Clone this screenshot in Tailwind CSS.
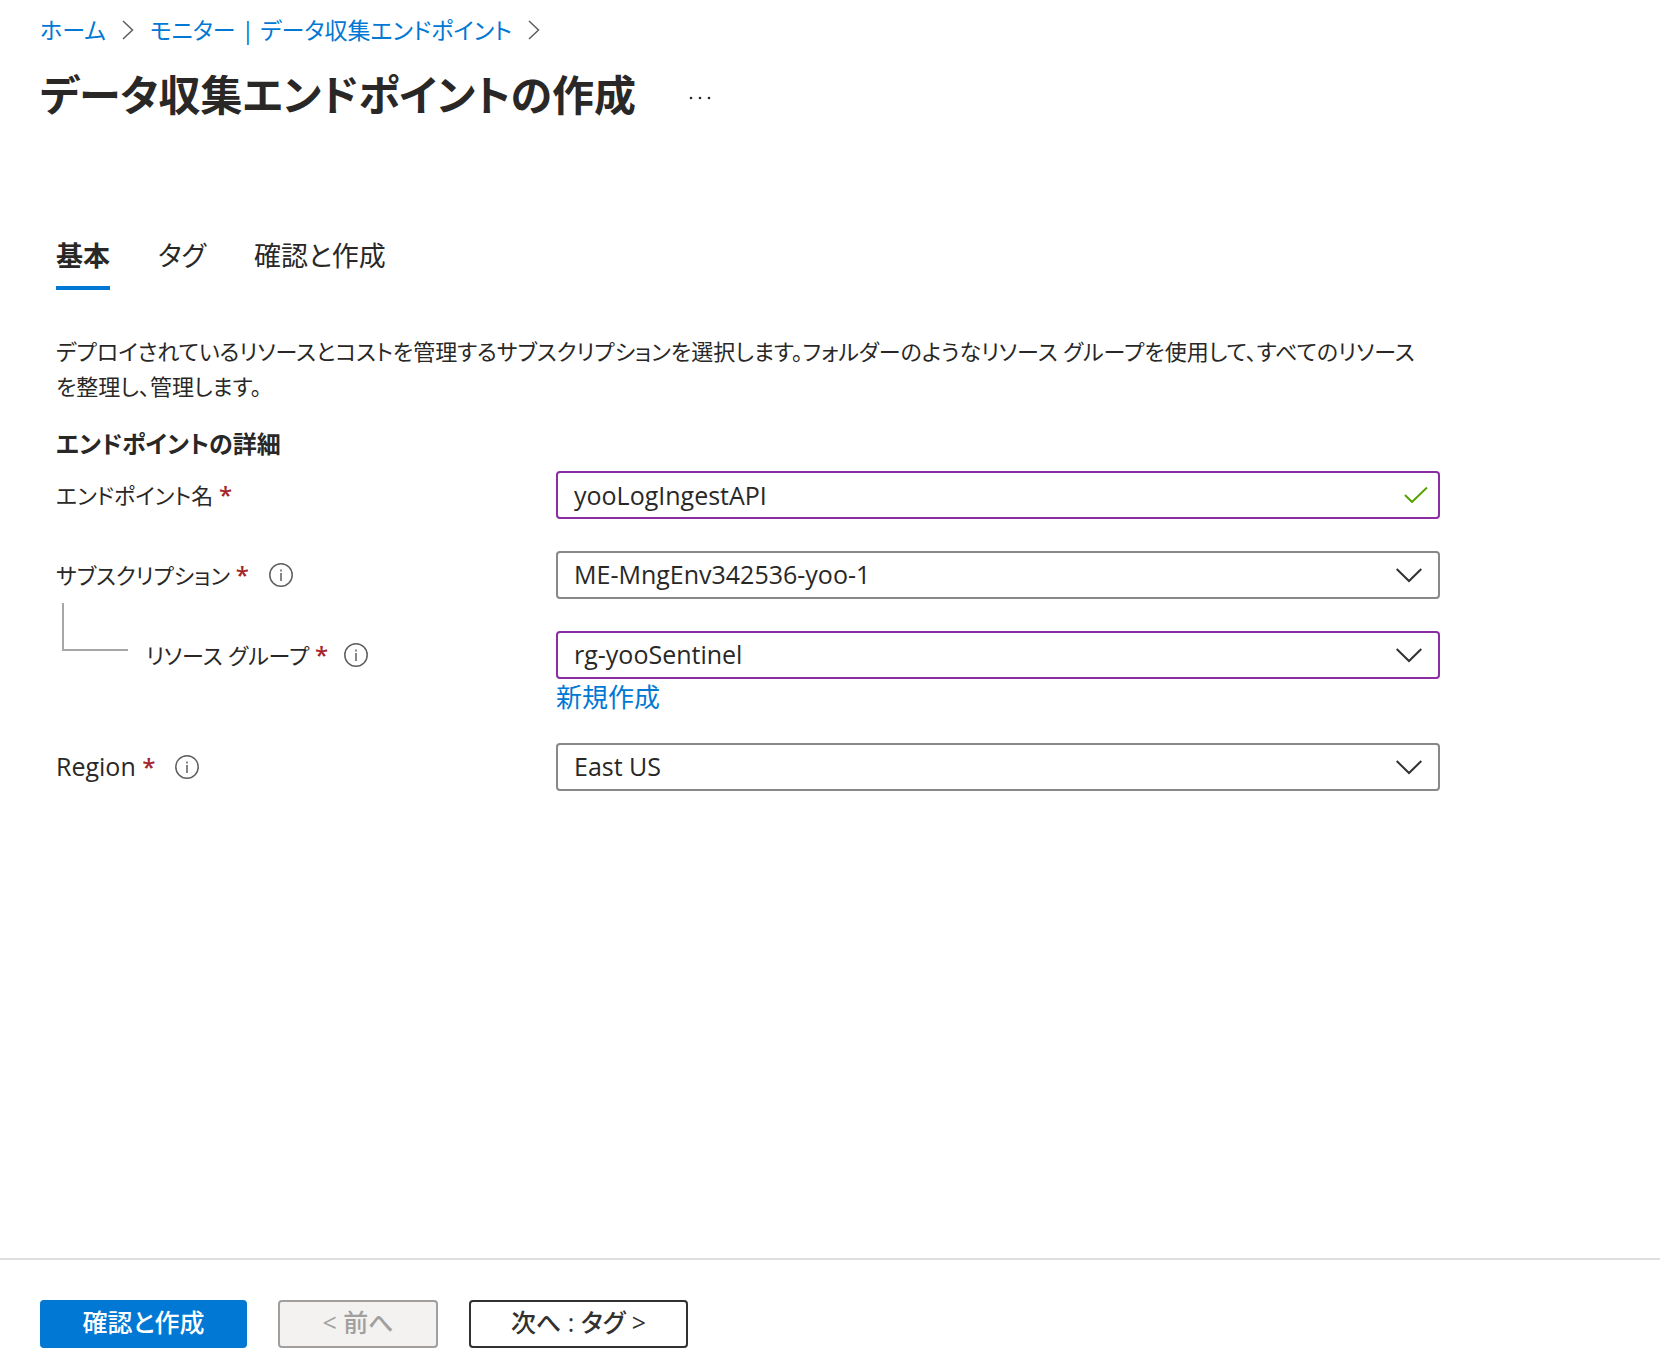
<!DOCTYPE html>
<html lang="ja">
<head>
    <meta charset="UTF-8">
    <meta name="viewport" content="width=device-width, initial-scale=1.0">
    <title>データ収集エンドポイントの作成</title>
    <script src="https://cdn.jsdelivr.net/npm/@tailwindcss/browser@4"></script>
</head>
<body class="flex flex-col min-h-screen bg-white text-[#292827] text-[22px] font-['Open_Sans','Noto_Sans_CJK_JP',sans-serif] [font-feature-settings:'palt']">

    <header class="px-10 pt-3">
        <nav class="flex items-center gap-4 h-9 text-[23px] text-[#0078d4]">
            <a href="#">ホーム</a>
            <svg class="w-3 h-5 text-[#605e5c]" viewBox="0 0 12 20" fill="none" stroke="currentColor" stroke-width="1.5"><path d="M1 1l9.500 9L1 19"/></svg>
            <a href="#">モニター | データ収集エンドポイント</a>
            <svg class="w-3 h-5 text-[#605e5c]" viewBox="0 0 12 20" fill="none" stroke="currentColor" stroke-width="1.5"><path d="M1 1l9.500 9L1 19"/></svg>
        </nav>
        <div class="flex items-center gap-12 mt-4 h-16">
            <h1 class="pb-1 text-[42px] font-bold">データ収集エンドポイントの作成</h1>
            <button type="button" aria-label="その他" class="w-8 h-8 flex items-center justify-center">
                <svg class="w-6 h-2" viewBox="0 0 24 8" fill="currentColor"><circle cx="3" cy="6" r="1.300"/><circle cx="12" cy="6" r="1.300"/><circle cx="21" cy="6" r="1.300"/></svg>
            </button>
        </div>
    </header>

    <main class="flex-1 px-14">
        <div class="flex gap-12 mt-[98px] h-16 text-[27px]" role="tablist">
            <button type="button" role="tab" aria-selected="true" class="h-16 font-bold border-b-4 border-[#0078d4]">基本</button>
            <button type="button" role="tab" aria-selected="false" class="h-16 pb-1">タグ</button>
            <button type="button" role="tab" aria-selected="false" class="h-16 pb-1">確認と作成</button>
        </div>

        <div class="max-w-[1384px]">
            <p class="mt-11 pr-3 leading-[35px]">デプロイされているリソースとコストを管理するサブスクリプションを選択します。フォルダーのようなリソース グループを使用して、すべてのリソースを整理し、管理します。</p>
            <h2 class="mt-5 h-[47px] text-2xl leading-[40px] font-bold">エンドポイントの詳細</h2>

            <form class="grid grid-cols-[500px_1fr] gap-y-8">
                <div class="flex items-center h-12">
                    <label for="name">エンドポイント名 <span class="text-2xl text-[#a4262c] font-semibold">*</span></label>
                </div>
                <div class="relative">
                    <input id="name" type="text" value="yooLogIngestAPI" class="block w-full h-12 px-4 border-2 border-[#8a2da5] rounded bg-white text-[25px]">
                    <svg class="absolute right-3 top-4 w-6 h-4 text-[#57a300]" viewBox="0 0 24 16" fill="none" stroke="currentColor" stroke-width="2"><path d="M1 8l7 7L23 0.500"/></svg>
                </div>

                <div class="flex items-center gap-5 h-12">
                    <label for="subscription">サブスクリプション <span class="text-2xl text-[#a4262c] font-semibold">*</span></label>
                    <svg class="w-6 h-6 text-[#605e5c]" viewBox="0 0 24 24" fill="none" stroke="currentColor" stroke-width="1.500"><circle cx="12" cy="12" r="11.200"/><path d="M12 10v8M12 6.500v2"/></svg>
                </div>
                <div class="relative">
                    <select id="subscription" class="block w-full h-12 px-4 border-2 border-[#8a8886] rounded bg-white text-[25px] appearance-none">
                        <option>ME-MngEnv342536-yoo-1</option>
                    </select>
                    <svg class="absolute right-4 top-4 w-7 h-4 text-[#323130] pointer-events-none" viewBox="0 0 28 16" fill="none" stroke="currentColor" stroke-width="2"><path d="M0.700 2L13 14L25.300 2"/></svg>
                </div>

                <div class="relative flex items-center gap-4 h-12 pl-[90px]">
                    <!-- tree line from the subscription to its resource group -->
                    <span class="absolute left-1.5 -top-7 w-[66px] h-12 border-l-2 border-b-2 border-[#a6a6a6]"></span>
                    <label for="group">リソース グループ <span class="text-2xl text-[#a4262c] font-semibold">*</span></label>
                    <svg class="w-6 h-6 text-[#605e5c]" viewBox="0 0 24 24" fill="none" stroke="currentColor" stroke-width="1.500"><circle cx="12" cy="12" r="11.200"/><path d="M12 10v8M12 6.500v2"/></svg>
                </div>
                <div class="relative">
                    <select id="group" class="block w-full h-12 px-4 border-2 border-[#8a2da5] rounded bg-white text-[25px] appearance-none">
                        <option>rg-yooSentinel</option>
                    </select>
                    <svg class="absolute right-4 top-4 w-7 h-4 text-[#323130] pointer-events-none" viewBox="0 0 28 16" fill="none" stroke="currentColor" stroke-width="2"><path d="M0.700 2L13 14L25.300 2"/></svg>
                    <a href="#" class="block w-fit -mb-1 leading-9 text-[26px] text-[#0078d4]">新規作成</a>
                </div>

                <div class="flex items-center gap-5 h-12">
                    <label for="region" class="text-[25px]">Region <span class="text-2xl text-[#a4262c] font-semibold">*</span></label>
                    <svg class="w-6 h-6 text-[#605e5c]" viewBox="0 0 24 24" fill="none" stroke="currentColor" stroke-width="1.500"><circle cx="12" cy="12" r="11.200"/><path d="M12 10v8M12 6.500v2"/></svg>
                </div>
                <div class="relative">
                    <select id="region" class="block w-full h-12 px-4 border-2 border-[#8a8886] rounded bg-white text-[25px] appearance-none">
                        <option>East US</option>
                    </select>
                    <svg class="absolute right-4 top-4 w-7 h-4 text-[#323130] pointer-events-none" viewBox="0 0 28 16" fill="none" stroke="currentColor" stroke-width="2"><path d="M0.700 2L13 14L25.300 2"/></svg>
                </div>
            </form>
        </div>
    </main>

    <footer class="flex gap-[31px] px-10 pt-10 pb-[11px] border-t-2 border-[#dfdfdf] text-[25px] font-medium">
        <button type="button" class="w-[207px] h-12 pb-0.5 rounded bg-[#0078d4] text-white">確認と作成</button>
        <button type="button" disabled class="w-40 h-12 pb-0.5 rounded border-2 border-[#a19f9d] bg-[#f3f2f1] text-[#a19f9d]">&lt; 前へ</button>
        <button type="button" class="w-[219px] h-12 pb-0.5 rounded border-2 border-[#323130] bg-white text-[#323130]">次へ : タグ &gt;</button>
    </footer>

</body>
</html>
